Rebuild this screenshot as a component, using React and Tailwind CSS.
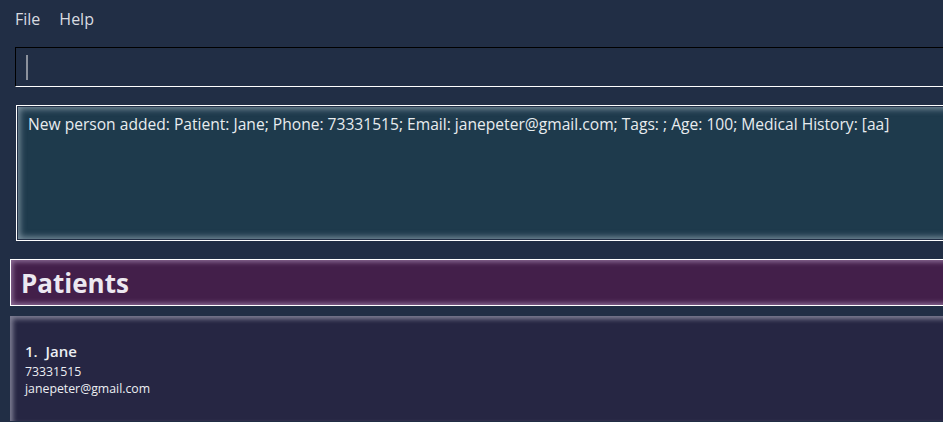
export default function App() {
  const font = { fontFamily: '"Open Sans", "Noto Sans", sans-serif' };
  return (
    <div className="w-[943px] h-[422px] overflow-hidden bg-[#212e45] relative" style={font}>
      <div className="w-[1000px] flex flex-col">
        {/* menu */}
        <div className="h-[38px] flex items-center gap-[19px] pl-[15px] text-[16px] text-[#d9dbe0]">
          <span>File</span>
          <span>Help</span>
        </div>
        {/* command box */}
        <div className="mt-[9px] ml-[15px] h-[40px] border-t border-l border-black border-b border-b-white bg-[#212e45] flex items-center pl-[10px]">
          <div className="w-[2px] h-[25px] bg-[#8b919c]" />
        </div>
        {/* result box */}
        <div className="mt-[18px] ml-[16px] h-[136px] border border-white p-[1px]">
          <div className="h-full bg-[#1e3a4c] shadow-[inset_0_0_6px_2px_rgba(200,215,225,0.55)] pl-[10px] pt-[7px] text-[15.6px] leading-[20px] text-[#e8ecef] whitespace-nowrap">
            New person added: Patient: Jane; Phone: 73331515; Email: janepeter@gmail.com; Tags: ; Age: 100; Medical History: [aa]
          </div>
        </div>
        {/* patients header */}
        <div className="mt-[18px] ml-[10px] h-[47px] border border-white bg-[#431f4a] shadow-[inset_0_0_5px_2px_rgba(190,160,200,0.6)] flex items-center pl-[10px]">
          <span className="text-[26px] font-bold text-[#ece8f0] leading-none">Patients</span>
        </div>
        {/* list */}
        <div className="mt-[10px] ml-[10px] h-[105px] bg-[#262643] shadow-[inset_3px_3px_5px_0_rgba(200,200,215,0.55)] pl-[15px] pt-[25px] text-[#eceef2]">
          <div className="text-[15px] font-semibold leading-[20px]">1.&nbsp;&nbsp;Jane</div>
          <div className="text-[12.3px] leading-[17px] mt-[2px]">73331515</div>
          <div className="text-[12.3px] leading-[17px]">janepeter@gmail.com</div>
        </div>
      </div>
    </div>
  );
}
